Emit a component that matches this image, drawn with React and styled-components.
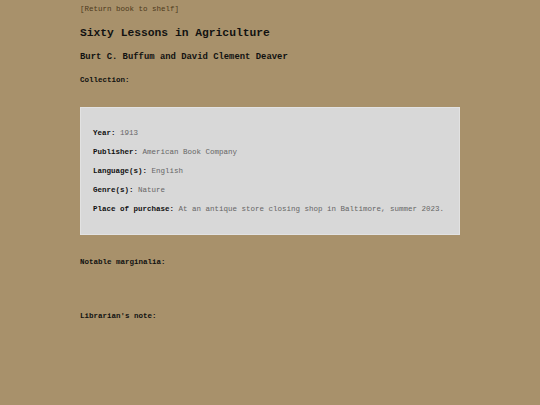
import React from 'react'
import styled, { createGlobalStyle } from 'styled-components'

const Global = createGlobalStyle`
  html, body {
    margin: 0;
    padding: 0;
    background: #a8916b;
  }
  body {
    font-family: "Liberation Mono", "Courier New", monospace;
    color: #111;
  }
`

const Page = styled.div`
  width: 380px;
  margin: 0 auto;
  padding-top: 4.5px;
`

const BackLink = styled.a`
  display: block;
  font-size: 7.5px;
  line-height: 9px;
  color: #4e3a1c;
  text-decoration: none;
`

const Title = styled.h1`
  margin: 12.5px 0 0;
  font-size: 11.3px;
  line-height: 14px;
  font-weight: bold;
`

const Author = styled.h2`
  margin: 12px 0 0;
  font-size: 8.9px;
  line-height: 11px;
  font-weight: bold;
`

const Label = styled.div`
  margin-top: ${p => p.$gap}px;
  font-size: 7.5px;
  line-height: 9px;
  font-weight: bold;
`

const InfoBox = styled.div`
  margin-top: 22px;
  background: #d8d8d8;
  border: 1px solid #e2e2e2;
  padding: 21.5px 12px 20px;
  display: flex;
  flex-direction: column;
  gap: 10.1px;
`

const Row = styled.div`
  font-size: 7.5px;
  line-height: 9px;
  color: #666;
  white-space: nowrap;
`

const Key = styled.b`
  color: #111;
`

const rows = [
  ['Year', '1913'],
  ['Publisher', 'American Book Company'],
  ['Language(s)', 'English'],
  ['Genre(s)', 'Nature'],
  ['Place of purchase', 'At an antique store closing shop in Baltimore, summer 2023.'],
]

export default function App() {
  return (
    <Page>
      <Global />
      <BackLink href="#">[Return book to shelf]</BackLink>
      <Title>Sixty Lessons in Agriculture</Title>
      <Author>Burt C. Buffum and David Clement Deaver</Author>
      <Label $gap={12.5}>Collection:</Label>
      <InfoBox>
        {rows.map(([k, v]) => (
          <Row key={k}>
            <Key>{k}:</Key> {v}
          </Row>
        ))}
      </InfoBox>
      <Label $gap={22.5}>Notable marginalia:</Label>
      <Label $gap={45}>Librarian's note:</Label>
    </Page>
  )
}
